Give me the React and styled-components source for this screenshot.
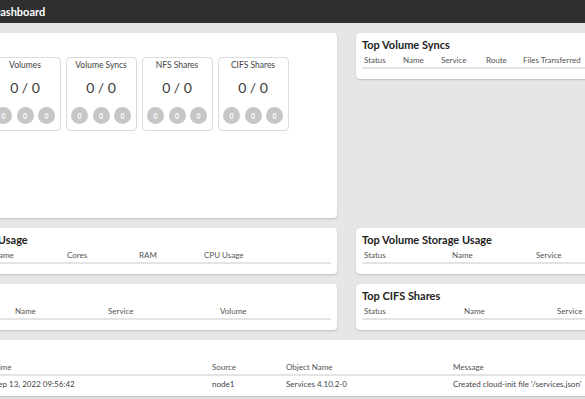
import React from 'react';
import styled, { createGlobalStyle } from 'styled-components';

const Global = createGlobalStyle`
  html, body {
    margin: 0;
    padding: 0;
    background: #e6e6e6;
    overflow: hidden;
    font-family: 'Lato', 'Open Sans', sans-serif;
  }
`;

const Shell = styled.div`
  margin-left: -92px;
  width: 877px;
`;

const TopBar = styled.header`
  height: 23px;
  background: #2f2f2f;
  display: flex;
  align-items: center;
  padding-left: 84px;
  color: #fff;
  font-weight: 700;
  font-size: 11px;
  padding-bottom: 1px;
  box-sizing: border-box;
`;

const Grid = styled.main`
  display: grid;
  grid-template-columns: 429px 429px;
  column-gap: 19px;
  row-gap: 10px;
  align-items: start;
  padding: 10px 0;
`;

const Card = styled.section`
  background: #fff;
  border-radius: 4px;
  box-shadow: 0 1px 2px rgba(0, 0, 0, 0.18);
  padding: 5px 6px 7px;
  box-sizing: border-box;
  grid-column: ${p => (p.$wide ? '1 / span 2' : 'auto')};
  height: ${p => (p.$height ? `${p.$height}px` : 'auto')};
`;

const Title = styled.h2`
  margin: 0 0 2px;
  font-size: 11px;
  line-height: 14px;
  font-weight: 700;
  color: #222;
  white-space: nowrap;
`;

const Stats = styled.div`
  display: flex;
  gap: 5px;
  margin-top: 5px;
  margin-left: -0.5px;
`;

const StatBox = styled.div`
  width: 71px;
  height: 74px;
  box-sizing: border-box;
  border: 1px solid #dcdcdc;
  border-radius: 4px;
  display: flex;
  flex-direction: column;
  align-items: center;
  padding-top: 2px;
`;

const StatName = styled.div`
  font-size: 8.5px;
  line-height: 11px;
  color: #444;
`;

const StatValue = styled.div`
  margin-top: 8px;
  font-size: 14px;
  line-height: 18px;
  color: #3a3a3a;
`;

const Dots = styled.div`
  display: flex;
  gap: 4.5px;
  margin-top: 10px;
`;

const Dot = styled.span`
  width: 17px;
  height: 17px;
  border-radius: 50%;
  background: #c6c6c6;
  color: #fff;
  font-size: 7px;
  font-weight: 700;
  display: flex;
  align-items: center;
  justify-content: center;
`;

const Row = styled.div`
  display: grid;
  grid-template-columns: ${p => p.$cols};
  font-size: 8px;
  line-height: ${p => (p.$head ? '13px' : '10px')};
  color: ${p => (p.$head ? '#555' : '#444')};
  border-bottom: ${p => (p.$head ? '2px solid #e4e4e4' : 'none')};
  white-space: nowrap;
  span {
    padding-left: 2px;
    overflow: hidden;
  }
`;

const Body = styled.div`
  padding-top: 3px;
`;

const stats = ['Services', 'Volumes', 'Volume Syncs', 'NFS Shares', 'CIFS Shares'];

const Table = ({ cols, head, rows = [] }) => (
  <>
    <Row $head $cols={cols}>
      {head.map(h => <span key={h}>{h}</span>)}
    </Row>
    <Body>
      {rows.map((r, i) => (
        <Row key={i} $cols={cols}>
          {r.map((c, j) => <span key={j}>{c}</span>)}
        </Row>
      ))}
    </Body>
  </>
);

export default function App() {
  return (
    <Shell>
      <Global />
      <TopBar>Dashboard</TopBar>
      <Grid>
        <Card $height={185}>
          <Title>Overview</Title>
          <Stats>
            {stats.map(s => (
              <StatBox key={s}>
                <StatName>{s}</StatName>
                <StatValue>0 / 0</StatValue>
                <Dots>
                  <Dot>0</Dot>
                  <Dot>0</Dot>
                  <Dot>0</Dot>
                </Dots>
              </StatBox>
            ))}
          </Stats>
        </Card>
        <Card>
          <Title>Top Volume Syncs</Title>
          <Table
            cols="39px 38px 45px 37px 70px 1fr"
            head={['Status', 'Name', 'Service', 'Route', 'Files Transferred', 'Last Sync']}
          />
        </Card>
        <Card>
          <Title>Top Service CPU Usage</Title>
          <Table
            cols="77px 74px 72px 65px 1fr"
            head={['Status', 'Name', 'Cores', 'RAM', 'CPU Usage']}
          />
        </Card>
        <Card>
          <Title>Top Volume Storage Usage</Title>
          <Table
            cols="88px 84px 84px 1fr"
            head={['Status', 'Name', 'Service', 'Used']}
          />
        </Card>
        <Card>
          <Title>Top NFS Shares</Title>
          <Table
            cols="99px 93px 112px 1fr"
            head={['Status', 'Name', 'Service', 'Volume']}
          />
        </Card>
        <Card>
          <Title>Top CIFS Shares</Title>
          <Table
            cols="100px 93px 93px 1fr"
            head={['Status', 'Name', 'Service', 'Volume']}
          />
        </Card>
        <Card $wide>
          <Title>Recent Events</Title>
          <Table
            cols="78px 218px 74px 167px 1fr"
            head={['Level', 'Time', 'Source', 'Object Name', 'Message']}
            rows={[['Info', 'Sep 13, 2022 09:56:42', 'node1', 'Services 4.10.2-0', "Created cloud-init file '/services.json'"]]}
          />
        </Card>
      </Grid>
    </Shell>
  );
}
